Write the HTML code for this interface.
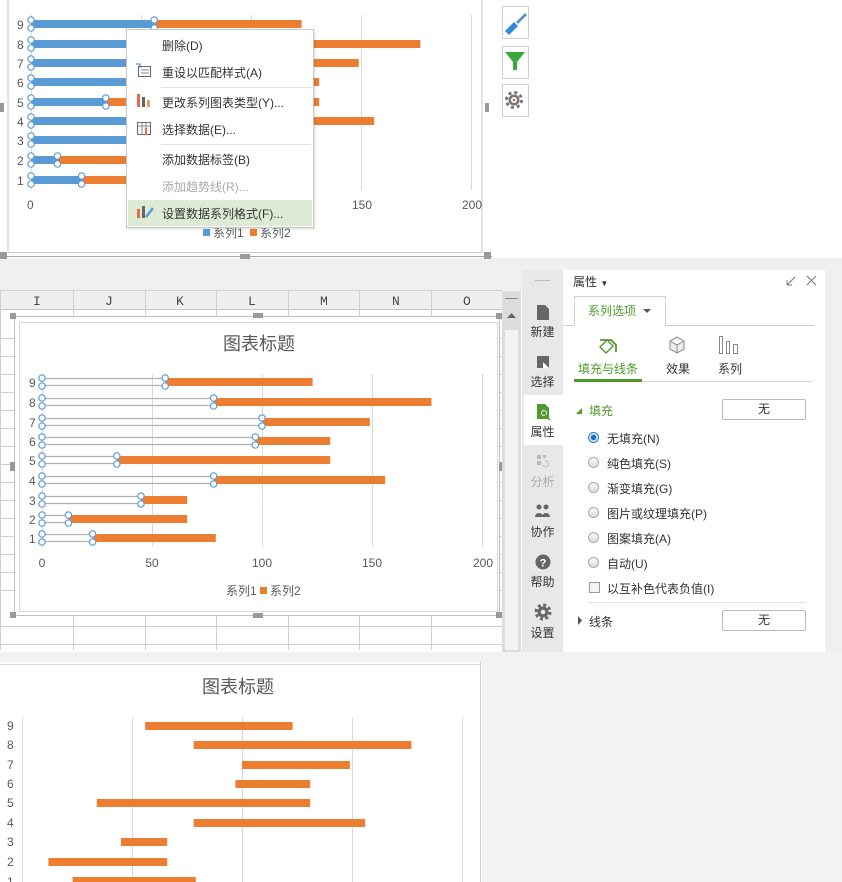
<!DOCTYPE html>
<html><head><meta charset="utf-8"><style>
body{margin:0;width:842px;height:882px;position:relative;overflow:hidden;background:#fff;font-family:"Liberation Sans","Noto Sans CJK SC",sans-serif;font-size:12px;color:#333}
.a{position:absolute}
.mi{position:absolute;left:162px;font-size:12px;color:#333}
.sb{position:absolute;left:522px;width:41px;text-align:center;font-size:12px;color:#333}
.rd{position:absolute;left:588px;width:11px;height:11px;border-radius:50%;border:1px solid #aaa;background:linear-gradient(#fafafa,#ddd);box-sizing:border-box}
.rt{position:absolute;left:607px;font-size:12px;color:#333}
.btn{position:absolute;left:722px;width:84px;height:21px;border:1px solid #bbb;box-sizing:border-box;text-align:center;line-height:19px;font-size:12px;border-radius:2px}
</style></head><body>
<svg class="a" style="left:0;top:0" width="842" height="882" font-family="Liberation Sans,Noto Sans CJK SC,sans-serif">
<rect x="0" y="258" width="842" height="34" fill="#f0f0f0"/>
<rect x="0" y="652" width="842" height="10" fill="#f2f2f2"/>
<rect x="482" y="660" width="360" height="222" fill="#f2f2f2"/>
<g stroke="#c8c8c8" stroke-width="1">
<line x1="8" y1="0" x2="8" y2="252"/><line x1="482" y1="0" x2="482" y2="252"/><line x1="8" y1="252.5" x2="482" y2="252.5"/>
<line x1="0" y1="256.5" x2="492" y2="256.5" stroke="#aaa"/>
</g>
<g fill="#999"><rect x="0" y="252" width="7" height="7"/><rect x="240" y="254" width="10" height="5"/><rect x="484" y="252" width="7" height="7"/><rect x="0" y="103" width="4" height="9"/><rect x="485" y="103" width="4" height="9"/></g>
<g stroke="#d9d9d9"><line x1="31.5" y1="15" x2="31.5" y2="190"/><line x1="141.5" y1="15" x2="141.5" y2="190"/><line x1="251.5" y1="15" x2="251.5" y2="190"/><line x1="361.5" y1="15" x2="361.5" y2="190"/><line x1="471.5" y1="15" x2="471.5" y2="190"/></g>
<g fill="#ed7d31">
<rect x="81.6" y="176" width="123.2" height="8"/><rect x="57.4" y="156" width="118.8" height="8"/><rect x="130" y="136" width="46.2" height="8"/><rect x="202.6" y="117" width="171.6" height="8"/><rect x="105.8" y="98" width="213.4" height="8"/><rect x="244.4" y="78" width="74.8" height="8"/><rect x="251" y="59" width="107.8" height="8"/><rect x="202.6" y="40" width="217.8" height="8"/><rect x="154.2" y="20" width="147.4" height="8"/>
</g>
<g fill="#5b9bd5">
<rect x="31" y="176" width="50.6" height="8"/><rect x="31" y="156" width="26.4" height="8"/><rect x="31" y="136" width="99" height="8"/><rect x="31" y="117" width="171.6" height="8"/><rect x="31" y="98" width="74.8" height="8"/><rect x="31" y="78" width="213.4" height="8"/><rect x="31" y="59" width="220" height="8"/><rect x="31" y="40" width="171.6" height="8"/><rect x="31" y="20" width="123.2" height="8"/>
</g>
<g fill="#fff" stroke="#5b9bd5" stroke-width="1.2">
<circle cx="31" cy="176" r="3.2"/><circle cx="31" cy="184" r="3.2"/><circle cx="81.6" cy="176" r="3.2"/><circle cx="81.6" cy="184" r="3.2"/>
<circle cx="31" cy="156" r="3.2"/><circle cx="31" cy="164" r="3.2"/><circle cx="57.4" cy="156" r="3.2"/><circle cx="57.4" cy="164" r="3.2"/>
<circle cx="31" cy="136" r="3.2"/><circle cx="31" cy="144" r="3.2"/>
<circle cx="31" cy="117" r="3.2"/><circle cx="31" cy="125" r="3.2"/>
<circle cx="31" cy="98" r="3.2"/><circle cx="31" cy="106" r="3.2"/><circle cx="105.8" cy="98" r="3.2"/><circle cx="105.8" cy="106" r="3.2"/>
<circle cx="31" cy="78" r="3.2"/><circle cx="31" cy="86" r="3.2"/>
<circle cx="31" cy="59" r="3.2"/><circle cx="31" cy="67" r="3.2"/>
<circle cx="31" cy="40" r="3.2"/><circle cx="31" cy="48" r="3.2"/>
<circle cx="31" cy="20" r="3.2"/><circle cx="31" cy="28" r="3.2"/><circle cx="154.2" cy="20" r="3.2"/><circle cx="154.2" cy="28" r="3.2"/>
</g>
<g font-size="12" fill="#595959">
<text x="17" y="185">1</text><text x="17" y="165">2</text><text x="17" y="145">3</text><text x="17" y="126">4</text><text x="17" y="107">5</text><text x="17" y="87">6</text><text x="17" y="68">7</text><text x="17" y="49">8</text><text x="17" y="29">9</text>
<text x="27" y="209">0</text><text x="352" y="209">150</text><text x="462" y="209">200</text>
<rect x="203" y="229" width="7" height="7" fill="#5b9bd5"/><text x="213" y="237">系列1</text><rect x="250" y="229" width="7" height="7" fill="#ed7d31"/><text x="260" y="237">系列2</text>
</g>
<g fill="#fff" stroke="#d0d0d0"><rect x="502.5" y="6.5" width="26" height="32"/><rect x="502.5" y="46.5" width="26" height="32"/><rect x="502.5" y="84.5" width="26" height="32"/></g>
<path d="M505 31 L514 22 L518 26 L509 35 Z" fill="#2f8be0"/><path d="M516 22 L525 13 L527 15 L518 24Z" fill="#5a8fd0"/>
<path d="M505 52 L525 52 L517 62 L517 70 L513 70 L513 62 Z" fill="#3aa83a"/>
<circle cx="514" cy="100" r="5.5" fill="#777"/><circle cx="514" cy="100" r="7.5" fill="none" stroke="#777" stroke-width="3" stroke-dasharray="3 2.9"/><circle cx="514" cy="100" r="3" fill="#fff"/><circle cx="514" cy="100" r="1.3" fill="#e8582c"/>
<rect x="0" y="291" width="502" height="18" fill="#efefef"/>
<line x1="0" y1="309.5" x2="502" y2="309.5" stroke="#c8c8c8"/>
<line x1="0" y1="290.5" x2="502" y2="290.5" stroke="#d0d0d0"/>
<g stroke="#d0d0d0"><line x1="73.5" y1="291" x2="73.5" y2="650"/><line x1="145.5" y1="291" x2="145.5" y2="650"/><line x1="216.5" y1="291" x2="216.5" y2="650"/><line x1="288.5" y1="291" x2="288.5" y2="650"/><line x1="359.5" y1="291" x2="359.5" y2="650"/><line x1="431.5" y1="291" x2="431.5" y2="650"/><line x1="0.5" y1="291" x2="0.5" y2="650"/></g>
<g stroke="#d0d0d0">
<line x1="0" y1="374.5" x2="502" y2="374.5"/><line x1="0" y1="392.5" x2="502" y2="392.5"/><line x1="0" y1="410.5" x2="502" y2="410.5"/><line x1="0" y1="428.5" x2="502" y2="428.5"/><line x1="0" y1="446.5" x2="502" y2="446.5"/><line x1="0" y1="464.5" x2="502" y2="464.5"/><line x1="0" y1="482.5" x2="502" y2="482.5"/><line x1="0" y1="500.5" x2="502" y2="500.5"/><line x1="0" y1="518.5" x2="502" y2="518.5"/><line x1="0" y1="536.5" x2="502" y2="536.5"/><line x1="0" y1="554.5" x2="502" y2="554.5"/><line x1="0" y1="572.5" x2="502" y2="572.5"/><line x1="0" y1="590.5" x2="502" y2="590.5"/><line x1="0" y1="626.5" x2="502" y2="626.5"/><line x1="0" y1="644.5" x2="502" y2="644.5"/><line x1="0" y1="338.5" x2="502" y2="338.5"/><line x1="0" y1="356.5" x2="502" y2="356.5"/>
</g>
<g font-family="Liberation Mono,monospace" font-size="13" fill="#444"><text x="33" y="305">I</text><text x="105" y="305">J</text><text x="176" y="305">K</text><text x="248" y="305">L</text><text x="320" y="305">M</text><text x="392" y="305">N</text><text x="463" y="305">O</text></g>
<rect x="502" y="291" width="19" height="361" fill="#dcdcdc"/><rect x="505" y="330" width="13" height="320" fill="#f4f4f4"/>
<line x1="505" y1="298.5" x2="518" y2="298.5" stroke="#888"/><path d="M507 318 L511.5 313 L516 318Z" fill="#666"/>
<rect x="14" y="316" width="486" height="300" fill="#fff"/>
<rect x="14.5" y="316.5" width="485" height="299" fill="none" stroke="#c0c0c0"/>
<rect x="19.5" y="322.5" width="478" height="289" fill="#fff" stroke="#d9d9d9"/>
<g fill="#999"><rect x="10" y="313" width="6" height="6"/><rect x="253" y="313" width="10" height="5"/><rect x="496" y="313" width="6" height="6"/><rect x="10" y="612" width="6" height="6"/><rect x="253" y="613" width="10" height="5"/><rect x="496" y="612" width="6" height="6"/><rect x="10" y="462" width="5" height="9"/><rect x="499" y="462" width="3" height="9"/></g>
<text x="259" y="350" font-size="18" fill="#595959" text-anchor="middle">图表标题</text>
<g stroke="#d9d9d9"><line x1="42.5" y1="374" x2="42.5" y2="547"/><line x1="152.5" y1="374" x2="152.5" y2="547"/><line x1="262.5" y1="374" x2="262.5" y2="547"/><line x1="372.5" y1="374" x2="372.5" y2="547"/><line x1="482.5" y1="374" x2="482.5" y2="547"/></g>
<g fill="#ed7d31">
<rect x="92.6" y="534" width="123.2" height="8"/><rect x="68.4" y="515" width="118.8" height="8"/><rect x="141" y="496" width="46.2" height="8"/><rect x="213.6" y="476" width="171.6" height="8"/><rect x="116.8" y="456" width="213.4" height="8"/><rect x="255.4" y="437" width="74.8" height="8"/><rect x="262" y="418" width="107.8" height="8"/><rect x="213.6" y="398" width="217.8" height="8"/><rect x="165.2" y="378" width="147.4" height="8"/>
</g>
<g stroke="#b0b0b8" stroke-width="1.2">
<path d="M42 534.5H92.6M42 541.5H92.6M42 515.5H68.4M42 522.5H68.4M42 496.5H141M42 503.5H141M42 476.5H213.6M42 483.5H213.6M42 456.5H116.8M42 463.5H116.8M42 437.5H255.4M42 444.5H255.4M42 418.5H262M42 425.5H262M42 398.5H213.6M42 405.5H213.6M42 378.5H165.2M42 385.5H165.2"/>
</g>
<g fill="#fff" stroke="#5b9bd5" stroke-width="1.2">
<circle cx="42" cy="534" r="3.2"/><circle cx="42" cy="542" r="3.2"/><circle cx="92.6" cy="534" r="3.2"/><circle cx="92.6" cy="542" r="3.2"/>
<circle cx="42" cy="515" r="3.2"/><circle cx="42" cy="523" r="3.2"/><circle cx="68.4" cy="515" r="3.2"/><circle cx="68.4" cy="523" r="3.2"/>
<circle cx="42" cy="496" r="3.2"/><circle cx="42" cy="504" r="3.2"/><circle cx="141" cy="496" r="3.2"/><circle cx="141" cy="504" r="3.2"/>
<circle cx="42" cy="476" r="3.2"/><circle cx="42" cy="484" r="3.2"/><circle cx="213.6" cy="476" r="3.2"/><circle cx="213.6" cy="484" r="3.2"/>
<circle cx="42" cy="456" r="3.2"/><circle cx="42" cy="464" r="3.2"/><circle cx="116.8" cy="456" r="3.2"/><circle cx="116.8" cy="464" r="3.2"/>
<circle cx="42" cy="437" r="3.2"/><circle cx="42" cy="445" r="3.2"/><circle cx="255.4" cy="437" r="3.2"/><circle cx="255.4" cy="445" r="3.2"/>
<circle cx="42" cy="418" r="3.2"/><circle cx="42" cy="426" r="3.2"/><circle cx="262" cy="418" r="3.2"/><circle cx="262" cy="426" r="3.2"/>
<circle cx="42" cy="398" r="3.2"/><circle cx="42" cy="406" r="3.2"/><circle cx="213.6" cy="398" r="3.2"/><circle cx="213.6" cy="406" r="3.2"/>
<circle cx="42" cy="378" r="3.2"/><circle cx="42" cy="386" r="3.2"/><circle cx="165.2" cy="378" r="3.2"/><circle cx="165.2" cy="386" r="3.2"/>
</g>
<g font-size="12" fill="#595959">
<text x="29" y="543">1</text><text x="29" y="524">2</text><text x="29" y="505">3</text><text x="29" y="485">4</text><text x="29" y="465">5</text><text x="29" y="446">6</text><text x="29" y="427">7</text><text x="29" y="407">8</text><text x="29" y="387">9</text>
<text x="42" y="567" text-anchor="middle">0</text><text x="152" y="567" text-anchor="middle">50</text><text x="262" y="567" text-anchor="middle">100</text><text x="372" y="567" text-anchor="middle">150</text><text x="483" y="567" text-anchor="middle">200</text>
<text x="226" y="595">系列1</text><rect x="260" y="587" width="7" height="7" fill="#ed7d31"/><text x="270" y="595">系列2</text>
</g>
<rect x="0" y="662" width="481" height="220" fill="#fff"/>
<line x1="480.5" y1="662" x2="480.5" y2="882" stroke="#d0d0d0"/>
<line x1="0" y1="664.5" x2="480" y2="664.5" stroke="#d9d9d9"/>
<text x="238" y="693" font-size="18" fill="#595959" text-anchor="middle">图表标题</text>
<g stroke="#d9d9d9"><line x1="22.5" y1="717" x2="22.5" y2="882"/><line x1="132.5" y1="717" x2="132.5" y2="882"/><line x1="242.5" y1="717" x2="242.5" y2="882"/><line x1="352.5" y1="717" x2="352.5" y2="882"/><line x1="462.5" y1="717" x2="462.5" y2="882"/></g>
<g fill="#ed7d31">
<rect x="72.6" y="877" width="123.2" height="8"/><rect x="48.4" y="858" width="118.8" height="8"/><rect x="121" y="838" width="46.2" height="8"/><rect x="193.6" y="819" width="171.6" height="8"/><rect x="96.8" y="799" width="213.4" height="8"/><rect x="235.4" y="780" width="74.8" height="8"/><rect x="242" y="761" width="107.8" height="8"/><rect x="193.6" y="741" width="217.8" height="8"/><rect x="145.2" y="722" width="147.4" height="8"/>
</g>
<g font-size="12" fill="#595959">
<text x="7" y="886">1</text><text x="7" y="866">2</text><text x="7" y="846">3</text><text x="7" y="827">4</text><text x="7" y="807">5</text><text x="7" y="788">6</text><text x="7" y="769">7</text><text x="7" y="749">8</text><text x="7" y="730">9</text>
</g>
<rect x="522" y="270" width="41" height="382" fill="#e8e8e8"/>
<rect x="524" y="395" width="39" height="50" fill="#fff"/>
<rect x="563" y="270" width="262" height="382" fill="#fff"/>
<rect x="825" y="270" width="17" height="382" fill="#f0f0f0"/>
<line x1="535" y1="280.5" x2="550" y2="280.5" stroke="#bbb"/>
<path d="M537 305 H545 L549 309 V320 H537Z" fill="#666"/>
<path d="M537 356 H549 V368 H537Z" fill="#666"/><path d="M543 362 L549 368 L543 368Z" fill="#fff"/>
<path d="M537 404 H545 L549 408 V419 H537Z" fill="#4e9a2a"/><circle cx="544" cy="413" r="2.5" fill="none" stroke="#fff"/><path d="M545 415 L550 420" stroke="#4e9a2a" stroke-width="1.5"/>
<path d="M537 455 h4v4h-4z M543 455 h3v3h-3z M537 461 h4v4h-4z" fill="#bbb"/><path d="M545 461 a3 3 0 1 1 -2 4" fill="none" stroke="#bbb"/>
<circle cx="539" cy="507" r="2.5" fill="#666"/><circle cx="546" cy="507" r="2.5" fill="#666"/><path d="M535 517 a4 4 0 0 1 8 0Z M542 517 a4 4 0 0 1 8 0Z" fill="#666"/>
<circle cx="543" cy="562" r="7.5" fill="#666"/><text x="543" y="566.5" font-size="11" font-weight="bold" fill="#fff" text-anchor="middle">?</text>
<circle cx="543" cy="612" r="5.5" fill="#666"/><circle cx="543" cy="612" r="7" fill="none" stroke="#666" stroke-width="3" stroke-dasharray="2.9 2.6"/><circle cx="543" cy="612" r="2.3" fill="#e8e8e8"/>
<path d="M574.5 325 V296.5 H665.5 V325" fill="#fff" stroke="#d0d0d0"/>
<line x1="563" y1="325.5" x2="574" y2="325.5" stroke="#d0d0d0"/><line x1="665" y1="325.5" x2="814" y2="325.5" stroke="#d0d0d0"/>
<path d="M643 309 L651 309 L647 313Z" fill="#555"/>
<path d="M600 347 L607 340 L613 346 L606 353Z" fill="none" stroke="#4e9a2a" stroke-width="1.4"/><path d="M600 340 H611 L616 345 V352" fill="none" stroke="#4e9a2a" stroke-width="1.8"/>
<path d="M677 337 L684 341 V349 L677 353 L670 349 V341Z M670 341 L677 345 L684 341 M677 345 V353" fill="#eee" stroke="#888"/>
<rect x="719.5" y="336.5" width="3" height="17" fill="none" stroke="#888"/><rect x="726.5" y="341.5" width="3" height="12" fill="none" stroke="#888"/><rect x="733.5" y="344.5" width="4" height="9" fill="none" stroke="#888"/>
<line x1="574" y1="381.5" x2="813" y2="381.5" stroke="#ddd"/>
<rect x="574" y="379" width="68" height="3" fill="#4e9a2a"/>
<path d="M576 414 L582 408 L582 414Z" fill="#4e9a2a"/>
<path d="M578 616 L582 620.5 L578 625Z" fill="#555"/>
<line x1="588" y1="602.5" x2="806" y2="602.5" stroke="#e0e0e0"/>
<path d="M787 285 L795 277 M787 285 H792 M787 285 V280" stroke="#777" fill="none"/>
<path d="M807 276 L816 285 M816 276 L807 285" stroke="#777"/>
</svg>
<div class="a" style="left:573px;top:273px;font-size:12px">属性 <span style="font-size:8px">▼</span></div>
<div class="a" style="left:588px;top:302px;font-size:12px;color:#4e9a2a">系列选项</div>
<div class="a" style="left:578px;top:360px;color:#4e9a2a">填充与线条</div>
<div class="a" style="left:666px;top:360px">效果</div>
<div class="a" style="left:718px;top:360px">系列</div>
<div class="a" style="left:589px;top:402px;color:#4e9a2a">填充</div>
<div class="btn" style="top:399px">无</div>
<div class="rd" style="top:432px;border-color:#2b7bc8;background:radial-gradient(circle,#1a6fc4 0 2.5px,#d7e9fa 3px)"></div><div class="rt" style="top:430px">无填充(N)</div>
<div class="rd" style="top:457px"></div><div class="rt" style="top:455px">纯色填充(S)</div>
<div class="rd" style="top:482px"></div><div class="rt" style="top:480px">渐变填充(G)</div>
<div class="rd" style="top:507px"></div><div class="rt" style="top:505px">图片或纹理填充(P)</div>
<div class="rd" style="top:532px"></div><div class="rt" style="top:530px">图案填充(A)</div>
<div class="rd" style="top:557px"></div><div class="rt" style="top:555px">自动(U)</div>
<div class="a" style="left:589px;top:582px;width:11px;height:11px;border:1px solid #999;box-sizing:border-box;background:#f4f4f4"></div><div class="rt" style="top:580px">以互补色代表负值(I)</div>
<div class="a" style="left:589px;top:613px">线条</div>
<div class="btn" style="top:610px">无</div>
<div class="sb" style="top:323px">新建</div>
<div class="sb" style="top:373px">选择</div>
<div class="sb" style="top:423px">属性</div>
<div class="sb" style="top:473px;color:#aaa">分析</div>
<div class="sb" style="top:523px">协作</div>
<div class="sb" style="top:573px">帮助</div>
<div class="sb" style="top:624px">设置</div>
<div class="a" style="left:126px;top:29px;width:186px;height:197px;background:#fff;border:1px solid #c8c8c8;box-shadow:1px 1px 2px rgba(0,0,0,.15)">
<div class="a" style="left:34px;top:57px;width:150px;height:1px;background:#e4e4e4"></div>
<div class="a" style="left:34px;top:114px;width:150px;height:1px;background:#e4e4e4"></div>
<div class="a" style="left:1px;top:170px;width:184px;height:26px;background:#ddebd5"></div>
<svg class="a" style="left:8px;top:32px" width="20" height="170">
<rect x="3.5" y="4.5" width="12" height="10" fill="#fff" stroke="#666"/><path d="M6 8h8M6 11h8" stroke="#888"/><path d="M1 2 l4 0 0 4" stroke="#3a7fd0" fill="none"/>
<rect x="2" y="32" width="3" height="13" fill="#e36c4b"/><rect x="7" y="35" width="3" height="10" fill="#666"/><rect x="12" y="38" width="3" height="7" fill="#e5a05a"/>
<rect x="2.5" y="60.5" width="13" height="12" fill="#fff" stroke="#666"/><path d="M2 64h14M7 61v12M11 61v12" stroke="#888"/><rect x="10" y="66" width="2" height="7" fill="#e36c4b"/>
<rect x="2" y="147" width="3" height="9" fill="#e36c4b"/><rect x="7" y="144" width="3" height="12" fill="#666"/><path d="M11 155 L18 146" stroke="#5b9bd5" stroke-width="2.5"/>
</svg>
</div>
<div class="mi" style="top:37px">删除(D)</div>
<div class="mi" style="top:64px">重设以匹配样式(A)</div>
<div class="mi" style="top:94px">更改系列图表类型(Y)...</div>
<div class="mi" style="top:121px">选择数据(E)...</div>
<div class="mi" style="top:151px">添加数据标签(B)</div>
<div class="mi" style="top:178px;color:#aaa">添加趋势线(R)...</div>
<div class="mi" style="top:205px">设置数据系列格式(F)...</div>
</body></html>
